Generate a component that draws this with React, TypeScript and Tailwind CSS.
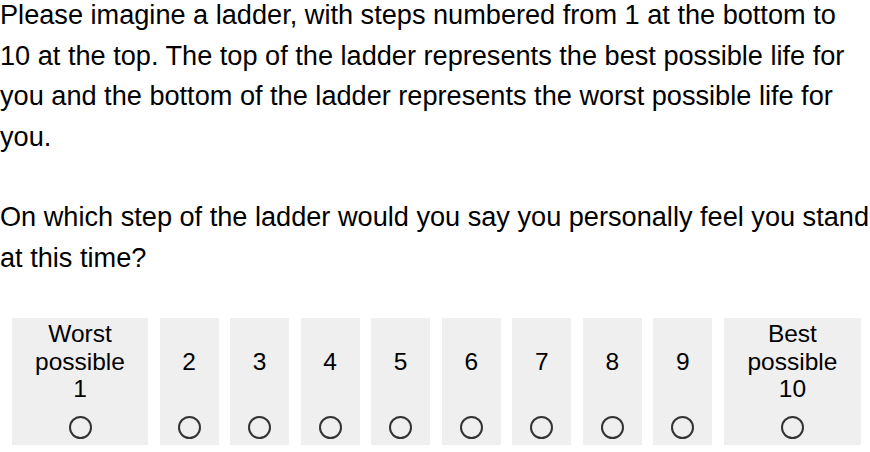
import React from 'react';

const options = [
  { label: ['Worst', 'possible', '1'], wide: true },
  { label: ['2'] },
  { label: ['3'] },
  { label: ['4'] },
  { label: ['5'] },
  { label: ['6'] },
  { label: ['7'] },
  { label: ['8'] },
  { label: ['9'] },
  { label: ['Best', 'possible', '10'], wide: true },
];

const Radio = () => (
  <span className="block w-[23px] h-[23px] rounded-full border-2 border-[#333333] bg-transparent" />
);

const App = () => {
  return (
    <div
      className="w-[870px] h-[452px] overflow-hidden bg-white text-black text-[27.15px] leading-[40.5px]"
      style={{ fontFamily: '"Liberation Sans", Arial, sans-serif' }}
    >
      <p className="-mt-[5px] w-[880px]">
        Please imagine a ladder, with steps numbered from 1 at the bottom to
        <br />
        10 at the top. The top of the ladder represents the best possible life for you and the bottom of the ladder
        represents the worst possible life for you.
      </p>
      <p className="mt-[40px] w-[880px]">
        On which step of the ladder would you say you personally feel you stand at this time?
      </p>

      <div className="mt-[40px] ml-[12px] grid grid-cols-[136px_repeat(8,59px)_137px] gap-x-[11.56px]">
        {options.map((opt, i) => (
          <div
            key={i}
            className="flex flex-col items-center bg-[#efefef] h-[127px] text-[24.5px] leading-[27.6px]"
          >
            <div className="mt-[2px] h-[83px] flex flex-col items-center justify-center text-center">
              {opt.label.map((line, j) => (
                <span key={j}>{line}</span>
              ))}
            </div>
            <div className="mt-[13px]">
              <Radio />
            </div>
          </div>
        ))}
      </div>
    </div>
  );
};

export default App;
